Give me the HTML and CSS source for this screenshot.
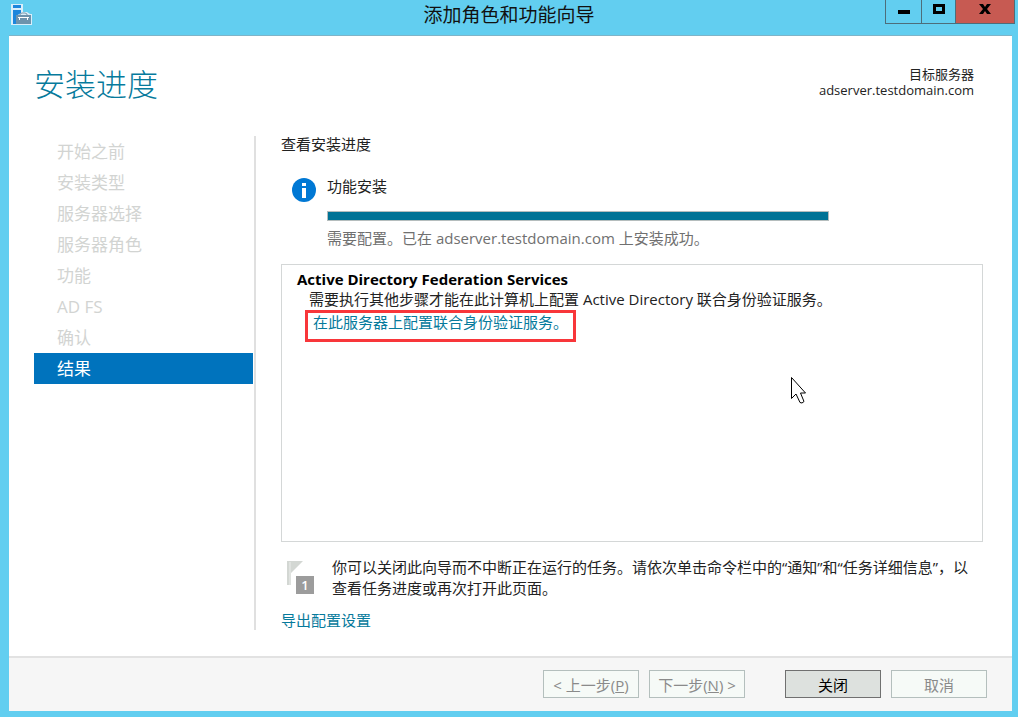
FILE: index.html
```html
<!DOCTYPE html>
<html lang="zh-CN">
<head>
    <meta charset="UTF-8">
    <meta name="viewport" content="width=device-width, initial-scale=1.0">
    <title>添加角色和功能向导</title>
    <link rel="stylesheet" href="styles.css">
</head>
<body>

<div class="window">

    <div class="titlebar">
        <svg class="app-icon" width="22" height="22" viewBox="0 0 22 22">
            <path d="M0 0h12v8h4l3 2h2v11H0z" fill="#d9eefa"/>
            <path d="M2 1h8v3H2z" fill="#1c86dc"/>
            <path d="M2 6h8v3l-5 3v8H2z" fill="#1c86dc"/>
            <path d="M5 11h15v9H5z" fill="#6d93ad"/>
            <path d="M9 11v-1l2-1h3l2 1v1" fill="none" stroke="#7b98ab"/>
            <path d="M7 13.500h11M8.500 14v2M16.500 14v2" fill="none" stroke="#fff"/>
        </svg>
        <span class="window-title">添加角色和功能向导</span>
        <div class="window-controls">
            <button type="button" class="min-btn" aria-label="最小化">
                <svg width="14" height="14" viewBox="0 0 14 14"><path d="M1 8h12v4H1z"/></svg>
            </button>
            <button type="button" class="max-btn" aria-label="最大化">
                <svg width="14" height="14" viewBox="0 0 14 14"><path d="M1 2h12v10H1zM4 5v4h6V5z" fill-rule="evenodd"/></svg>
            </button>
            <button type="button" class="close-btn" aria-label="关闭窗口">
                <svg width="14" height="14" viewBox="0 0 14 14"><path d="M1 2h4l2 3 2-3h4L9 7l4 5H9L7 9l-2 3H1l4-5z"/></svg>
            </button>
        </div>
    </div>

    <div class="content">

        <div class="header">
            <h1>安装进度</h1>
            <div class="target">
                <div>目标服务器</div>
                <div>adserver.testdomain.com</div>
            </div>
        </div>

        <div class="body">
            <ul class="steps">
                <li>开始之前</li>
                <li>安装类型</li>
                <li>服务器选择</li>
                <li>服务器角色</li>
                <li>功能</li>
                <li>AD FS</li>
                <li>确认</li>
                <li class="active">结果</li>
            </ul>

            <div class="main">
                <h2>查看安装进度</h2>

                <div class="task">
                    <svg class="info-icon" width="24" height="24" viewBox="0 0 24 24">
                        <circle cx="12" cy="12" r="12" fill="#0078d4"/>
                        <path d="M10 5h4v3h-4zM10 10h4v10h-4z" fill="#fff"/>
                    </svg>
                    <div class="task-info">
                        <label for="progress">功能安装</label>
                        <progress id="progress" value="100" max="100"></progress>
                        <p class="status">需要配置。已在 adserver.testdomain.com 上安装成功。</p>
                    </div>
                </div>

                <div class="panel">
                    <h3>Active Directory Federation Services</h3>
                    <p>需要执行其他步骤才能在此计算机上配置 Active Directory 联合身份验证服务。</p>
                    <a href="#" class="config-link">在此服务器上配置联合身份验证服务。</a>
                    <svg class="cursor" width="18" height="30" viewBox="0 0 18 30">
                        <path d="M1.500 1.500v21l4.500-4.500 4 8.500q2 1.500 4-1l-3.500-8.500h5z" fill="#fff" stroke="#000"/>
                    </svg>
                </div>

                <div class="note">
                    <svg class="flag-icon" width="28" height="34" viewBox="0 0 28 34">
                        <path d="M0 0h16L4 12v12H0z" fill="#d3d7d3"/>
                        <path d="M3 1v23" stroke="#eceeec"/>
                        <path d="M9 15h18v18H9z" fill="#9c9c9c"/>
                        <text x="18" y="29">1</text>
                    </svg>
                    <p>你可以关闭此向导而不中断正在运行的任务。请依次单击命令栏中的“通知”和“任务详细信息”，以查看任务进度或再次打开此页面。</p>
                </div>

                <a href="#" class="export-link">导出配置设置</a>
            </div>
        </div>

        <div class="footer">
            <button type="button" disabled>&lt; 上一步(<u>P</u>)</button>
            <button type="button" disabled>下一步(<u>N</u>) &gt;</button>
            <button type="button" class="primary">关闭</button>
            <button type="button" disabled>取消</button>
        </div>

    </div>

</div>

</body>
</html>
```

FILE: styles.css
```css
* {
    box-sizing: border-box;
}

body {
    margin: 0;
    font-family: "Open Sans", "Noto Sans CJK SC", sans-serif;
    font-size: 15px;
    line-height: 20px;
    color: #222;
}

h1, h2, h3, p, ul {
    margin: 0;
    padding: 0;
    font-weight: normal;
}

a {
    color: #067a9c;
    text-decoration: none;
}

button {
    font-family: inherit;
    font-size: 15px;
    padding: 0;
}

.window {
    min-height: 100vh;
    display: flex;
    flex-direction: column;
    padding-bottom: 6px;
    background-color: #62cef0;
}

/* title bar */
.titlebar {
    display: grid;
    grid-template-columns: 1fr auto 1fr;
    align-items: start;
    height: 35px;
    padding: 0 3px;
}

.app-icon {
    margin: 4px 0 0 8px;
}

.window-title {
    font-size: 19px;
    line-height: 30px;
    color: #111;
}

.window-controls {
    display: flex;
    justify-self: end;
    border: 1px solid #4d6d7a;
    border-top: none;
}

.window-controls button {
    display: flex;
    align-items: center;
    justify-content: center;
    height: 23px;
    padding-bottom: 5px;
    background-color: #62cef0;
    border: none;
    border-right: 1px solid #4d6d7a;
}

.window-controls .min-btn {
    width: 36px;
}

.window-controls .max-btn {
    width: 34px;
}

.window-controls .close-btn {
    width: 58px;
    background-color: #c75a52;
    border-right: none;
}

.content {
    flex: 1;
    display: flex;
    flex-direction: column;
    margin: 0 6px 0 9px;
    background-color: #fff;
    border-top: 1px solid #7fb4c8;
}

/* header */
.header {
    display: flex;
    justify-content: space-between;
    height: 98px;
    padding: 30px 38px 0 25px;
}

.header h1 {
    font-size: 31px;
    font-weight: 300;
    line-height: 36px;
    color: #067a9c;
}

.target {
    font-size: 13px;
    line-height: 16px;
    text-align: right;
}

/* steps and main area */
.body {
    flex: 1;
    display: flex;
    padding: 0 25px 26px;
}

.steps {
    width: 222px;
    flex-shrink: 0;
    margin-top: 2px;
    padding-right: 1px;
    border-right: 2px solid #e0e0e0;
    list-style: none;
    font-size: 17px;
    line-height: 31px;
    color: #d2d4d2;
}

.steps li {
    padding-left: 23px;
}

.steps .active {
    background-color: #0073bd;
    color: #fff;
}

.main {
    flex: 1;
    display: flex;
    flex-direction: column;
    padding-left: 25px;
}

.main h2 {
    font-size: 15px;
}

.task {
    display: flex;
    gap: 11px;
    margin: 22px 0 16px;
    padding-left: 11px;
}

.info-icon {
    margin-top: 2px;
    flex-shrink: 0;
}

.task-info {
    flex: 1;
}

.task-info label,
.task-info progress {
    display: block;
}

progress {
    appearance: none;
    width: 502px;
    max-width: 100%;
    height: 10px;
    margin: 15px 0 7px;
    border: 1px solid #b5bdbd;
}

progress::-webkit-progress-bar {
    background-color: #e6e6e6;
}

progress::-webkit-progress-value {
    background-color: #007396;
}

.status {
    color: #707070;
}

.panel {
    position: relative;
    flex: 1;
    margin-right: 4px;
    padding: 4px 15px;
    border: 1px solid #d4d7d7;
}

.panel h3 {
    font-size: 15px;
    font-weight: bold;
    color: #000;
}

.panel p {
    padding-left: 12px;
}

.config-link {
    display: inline-block;
    height: 32px;
    margin: 1px 0 0 8px;
    padding: 0 5px;
    border: 3px solid #f8363a;
    line-height: 19px;
}

.cursor {
    position: absolute;
    left: 508px;
    top: 111px;
}

.note {
    display: flex;
    gap: 17px;
    margin: 15px 0 11px;
    padding: 0 12px 0 6px;
    line-height: 21px;
}

.flag-icon {
    flex-shrink: 0;
    margin-top: 4px;
}

.flag-icon text {
    font-size: 13px;
    font-weight: 600;
    text-anchor: middle;
    fill: #fff;
}

.export-link {
    align-self: flex-start;
}

/* footer */
.footer {
    display: flex;
    justify-content: flex-end;
    gap: 10px;
    padding: 12px 25px 13px;
    background-color: #f6f6f6;
    border-top: 2px solid #e2e2e2;
}

.footer button {
    width: 96px;
    height: 28px;
    background-color: #f6faf7;
    border: 1px solid #b4bfbd;
    color: #8a8a8a;
}

.footer .primary {
    margin-left: 30px;
    background-color: #dde1de;
    border: 1px solid #707070;
    color: #000;
}
```
